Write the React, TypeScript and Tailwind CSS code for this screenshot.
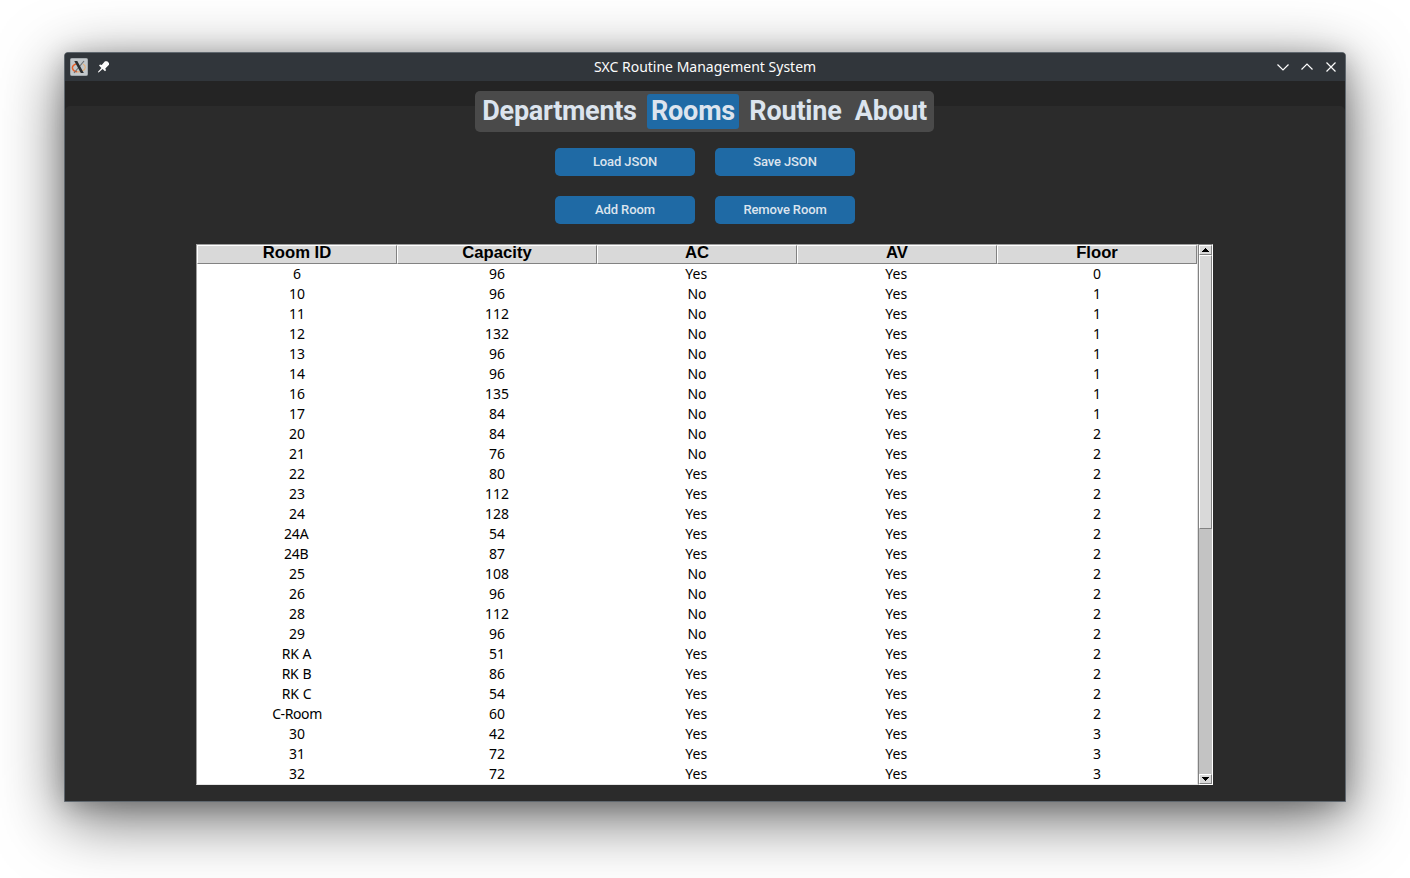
import React from "react";

type Room = [string, string, string, string, string];

const columns = ["Room ID", "Capacity", "AC", "AV", "Floor"];

const rooms: Room[] = [
  ["6", "96", "Yes", "Yes", "0"],
  ["10", "96", "No", "Yes", "1"],
  ["11", "112", "No", "Yes", "1"],
  ["12", "132", "No", "Yes", "1"],
  ["13", "96", "No", "Yes", "1"],
  ["14", "96", "No", "Yes", "1"],
  ["16", "135", "No", "Yes", "1"],
  ["17", "84", "No", "Yes", "1"],
  ["20", "84", "No", "Yes", "2"],
  ["21", "76", "No", "Yes", "2"],
  ["22", "80", "Yes", "Yes", "2"],
  ["23", "112", "Yes", "Yes", "2"],
  ["24", "128", "Yes", "Yes", "2"],
  ["24A", "54", "Yes", "Yes", "2"],
  ["24B", "87", "Yes", "Yes", "2"],
  ["25", "108", "No", "Yes", "2"],
  ["26", "96", "No", "Yes", "2"],
  ["28", "112", "No", "Yes", "2"],
  ["29", "96", "No", "Yes", "2"],
  ["RK A", "51", "Yes", "Yes", "2"],
  ["RK B", "86", "Yes", "Yes", "2"],
  ["RK C", "54", "Yes", "Yes", "2"],
  ["C-Room", "60", "Yes", "Yes", "2"],
  ["30", "42", "Yes", "Yes", "3"],
  ["31", "72", "Yes", "Yes", "3"],
  ["32", "72", "Yes", "Yes", "3"],
];

function TitleBar() {
  return (
    <header className="flex h-7 shrink-0 items-center bg-[#31363b] font-['Noto_Sans',sans-serif] text-[14px] text-[#fcfcfc]">
      <div className="flex w-20 items-center gap-[8px] pl-[5px]">
        <svg width="18" height="18" viewBox="0 0 18 18">
          <rect x="0.5" y="0.5" width="17" height="17" rx="1" fill="#c3c8cb" stroke="#a3a9ad" />
          <path d="M6.500 5.700C3.500 6.500 1.900 8.500 2.500 10.500c.6 2 2.500 3.100 4.800 3.300" fill="none" stroke="#e8622c" strokeWidth="1.500" />
          <path d="M7.500 13.800c4 .3 7.500-1.500 7.800-4.300.1-1.500-.8-2.800-2.300-3.500" fill="none" stroke="#e6b07a" strokeWidth="1.200" />
          <path d="M14 3L4 15" stroke="#6a6e71" strokeWidth="1.100" />
          <path d="M4.300 3h3l6.500 12h-3z" fill="#2b2e31" />
        </svg>
        <svg width="14" height="14" viewBox="0 0 14 14" fill="#fcfcfc">
          <path d="M9 1.200h2.200L13 3v1.800L9.300 8.500l.7 1.800-1 1-2.400-2.300L3 12.200l-1 .300.200-1 3.200-3.600L3 5.600l1-1 1.700.5z" />
        </svg>
      </div>
      <h1 className="flex-1 text-center leading-7">SXC Routine Management System</h1>
      <div className="flex w-20 items-center justify-end gap-[12px] pr-[8px]">
        <svg width="12" height="12" viewBox="0 0 12 12" fill="none" stroke="#fcfcfc" strokeWidth="1.200">
          <path d="M0.500 3.500L6 9l5.500-5.500" />
        </svg>
        <svg width="12" height="12" viewBox="0 0 12 12" fill="none" stroke="#fcfcfc" strokeWidth="1.200">
          <path d="M0.500 8.500L6 3l5.500 5.500" />
        </svg>
        <svg width="12" height="12" viewBox="0 0 12 12" fill="none" stroke="#fcfcfc" strokeWidth="1.200">
          <path d="M1.500 1.500l9 9M10.500 1.500l-9 9" />
        </svg>
      </div>
    </header>
  );
}

function Tabs() {
  return (
    <nav className="mr-px flex h-[41px] w-[459px] items-center rounded-[5px] bg-[#4a4a4a] px-[3px] font-['Roboto',sans-serif] text-[27px] leading-[35px] font-bold tracking-[-0.2px] text-[#dce4ee]">
      <button className="h-[35px] w-[163px] rounded-[3px] tracking-[-0.3px]">Departments</button>
      <button className="ml-[6px] h-[35px] w-[92px] rounded-[3px] bg-[#1f6aa5]">Rooms</button>
      <button className="ml-[3px] h-[35px] w-[106px] rounded-[3px] pl-px">Routine</button>
      <button className="h-[35px] flex-1 rounded-[3px] pl-[3px] tracking-[-0.1px]">About</button>
    </nav>
  );
}

function ActionButton({ label }: { label: string }) {
  return (
    <button className="h-7 w-[140px] rounded-[5px] bg-[#1f6aa5] text-[13px] leading-7 font-medium tracking-[-0.12px] text-[#dce4ee]">
      {label}
    </button>
  );
}

function ArrowButton({ down = false }: { down?: boolean }) {
  return (
    <div className="flex h-[10px] items-center justify-center border-t border-r border-b border-l border-t-white border-r-[#828282] border-b-[#828282] border-l-white bg-[#d9d9d9]">
      <svg width="8" height="4" viewBox="0 0 8 4" shapeRendering="crispEdges">
        <path d={down ? "M0 0h7v1H0zM1 1h5v1H1zM2 2h3v1H2zM3 3h1v1H3z" : "M3 0h1v1H3zM2 1h3v1H2zM1 2h5v1H1zM0 3h7v1H0z"} fill="#000" />
      </svg>
    </div>
  );
}

function ScrollBar() {
  return (
    <div className="flex w-[15px] flex-col border-t border-r border-b border-l border-t-[#828282] border-r-white border-b-white border-l-[#828282] bg-[#c3c3c3]">
      <ArrowButton />
      <div className="h-[274px] border-t border-r border-b border-l border-t-white border-r-[#828282] border-b-[#828282] border-l-white bg-[#d9d9d9]" />
      <div className="flex-1" />
      <ArrowButton down />
    </div>
  );
}

function cellClass(value: string) {
  if (value === "Yes") return "pr-[1.5px]";
  if (value.startsWith("RK")) return "pr-px tracking-[-0.3px] [word-spacing:0.7px]";
  if (/^\d+[A-Z]/.test(value)) return "pr-[1.5px] tracking-[-0.2px]";
  if (value.includes("-")) return "tracking-[-0.4px]";
  return "";
}

function RoomTable() {
  return (
    <div className="mt-5 mr-px flex h-[541px] w-[1017px]">
      <div className="w-[1002px] border-t border-r border-b border-l border-t-[#9f9f9f] border-r-[#dfdfdf] border-b-[#e6e6e6] border-l-[#9f9f9f] bg-white text-black">
        <div className="grid grid-cols-5 font-['Liberation_Sans',sans-serif] text-[16.67px] font-bold">
          {columns.map((c) => (
            <div key={c} className="h-[19px] border-t border-r border-b border-l border-t-white border-r-[#828282] border-b-[#828282] border-l-white bg-[#d9d9d9] text-center leading-[14px]">
              {c}
            </div>
          ))}
        </div>
        {rooms.map((room) => (
          <div key={room[0]} className="grid h-5 grid-cols-5 text-center font-['Noto_Sans',sans-serif] text-[14px] leading-5">
            {room.map((value, i) => (
              <div key={i} className={cellClass(value)}>
                {value}
              </div>
            ))}
          </div>
        ))}
      </div>
      <ScrollBar />
    </div>
  );
}

export default function App() {
  return (
    <div className="flex h-[878px] w-[1410px] items-start overflow-hidden bg-white pt-[52px] pl-16">
      <div className="flex h-[750px] w-[1282px] flex-col overflow-hidden rounded-t-[4px] border border-[#5f676e] bg-[#242424] shadow-[0_16px_64px_rgba(0,0,0,0.6),0_4px_24px_rgba(0,0,0,0.2)]">
        <TitleBar />
        <main className="flex flex-1 flex-col">
          <div className="h-[10px] shrink-0" />
          <div className="grid flex-1 grid-rows-[15px_1fr]">
            <div className="col-start-1 row-start-2 rounded-t-[5px] bg-[#2b2b2b]" />
            <div className="z-10 col-start-1 row-span-2 row-start-1 flex flex-col items-center">
              <Tabs />
              <div className="mt-4 grid grid-cols-2 gap-5 font-['Roboto',sans-serif]">
                <ActionButton label="Load JSON" />
                <ActionButton label="Save JSON" />
                <ActionButton label="Add Room" />
                <ActionButton label="Remove Room" />
              </div>
              <RoomTable />
            </div>
          </div>
        </main>
      </div>
    </div>
  );
}
